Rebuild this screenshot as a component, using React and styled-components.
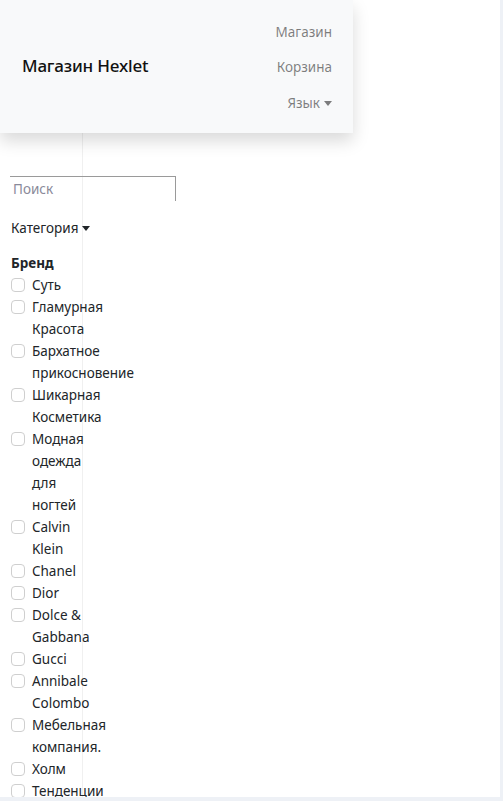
import React from 'react';
import styled, { createGlobalStyle } from 'styled-components';

const brands = [
  'Суть',
  'Гламурная Красота',
  'Бархатное прикосновение',
  'Шикарная Косметика',
  'Модная одежда для ногтей',
  'Calvin Klein',
  'Chanel',
  'Dior',
  'Dolce & Gabbana',
  'Gucci',
  'Annibale Colombo',
  'Мебельная компания.',
  'Холм',
  'Тенденции'
];

export default function App() {
  return (
    <>
      <GlobalStyle />
      <Page>
        <Header>
          <Brand>Магазин Hexlet</Brand>
          <Nav>
            <NavLink>Магазин</NavLink>
            <NavLink>Корзина</NavLink>
            <NavLink>
              Язык<Caret />
            </NavLink>
          </Nav>
        </Header>
        <Body>
          <Sidebar>
            <Search placeholder="Поиск" />
            <Dropdown>
              Категория<Caret />
            </Dropdown>
            <FilterTitle>Бренд</FilterTitle>
            <List>
              {brands.map((name) => (
                <Item key={name}>
                  <Box />
                  <Label>{name}</Label>
                </Item>
              ))}
            </List>
          </Sidebar>
        </Body>
      </Page>
    </>
  );
}

const GlobalStyle = createGlobalStyle`
  body {
    margin: 0;
    background: #eef1f6;
    font-family: "Noto Sans", "Open Sans", sans-serif;
    font-size: 13.5px;
    color: #212529;
  }
`;

const Page = styled.div`
  width: 500px;
  height: 797px;
  background: #fff;
  overflow: hidden;
  display: flex;
  flex-direction: column;
`;

const Header = styled.header`
  position: relative;
  z-index: 1;
  width: 353px;
  height: 133px;
  box-sizing: border-box;
  padding: 0 21px 0 22px;
  display: flex;
  align-items: center;
  justify-content: space-between;
  background: #f8f9fa;
  box-shadow: 0 8px 16px rgba(0, 0, 0, 0.15);
  flex-shrink: 0;
`;

const Brand = styled.div`
  margin-bottom: 3px;
  font-size: 17px;
  font-weight: 500;
  color: #111;
  letter-spacing: -0.2px;
`;

const Nav = styled.nav`
  display: flex;
  flex-direction: column;
  align-items: flex-end;
  padding-top: 3px;
`;

const NavLink = styled.a`
  display: flex;
  align-items: center;
  padding: 8px 0;
  line-height: 19.5px;
  color: rgba(0, 0, 0, 0.5);
  cursor: pointer;
`;

const Caret = styled.span`
  display: inline-block;
  margin-left: 4px;
  border-top: 5px solid currentColor;
  border-left: 4.5px solid transparent;
  border-right: 4.5px solid transparent;
`;

const Body = styled.div`
  display: flex;
  flex: 1;
`;

const Sidebar = styled.aside`
  width: 83px;
  box-sizing: border-box;
  border-right: 1px solid #f0f0f0;
  padding: 43px 0 0 10px;
`;

const Search = styled.input`
  display: block;
  width: 166px;
  height: 25px;
  box-sizing: border-box;
  margin: 0;
  padding: 0 3px;
  border: none;
  border-top: 1px solid #9a9a9a;
  border-right: 1px solid #9a9a9a;
  background: transparent;
  font: inherit;
  outline: none;

  &::placeholder {
    color: #8a8a9a;
  }
`;

const Dropdown = styled.div`
  display: flex;
  align-items: center;
  margin: 16px 0 0 1px;
  line-height: 22px;
  white-space: nowrap;
`;

const FilterTitle = styled.div`
  margin: 13px 0 0 1px;
  font-weight: 700;
  line-height: 22px;
`;

const List = styled.div`
  display: flex;
  flex-direction: column;
`;

const Item = styled.label`
  display: flex;
  align-items: flex-start;
  line-height: 22px;
`;

const Box = styled.span`
  flex-shrink: 0;
  width: 14px;
  height: 14px;
  box-sizing: border-box;
  margin: 4px 7px 0 1px;
  border: 1px solid #cfcfcf;
  border-radius: 4px;
  background: #fff;
`;

const Label = styled.span`
  width: 56px;
  flex-shrink: 0;
`;
